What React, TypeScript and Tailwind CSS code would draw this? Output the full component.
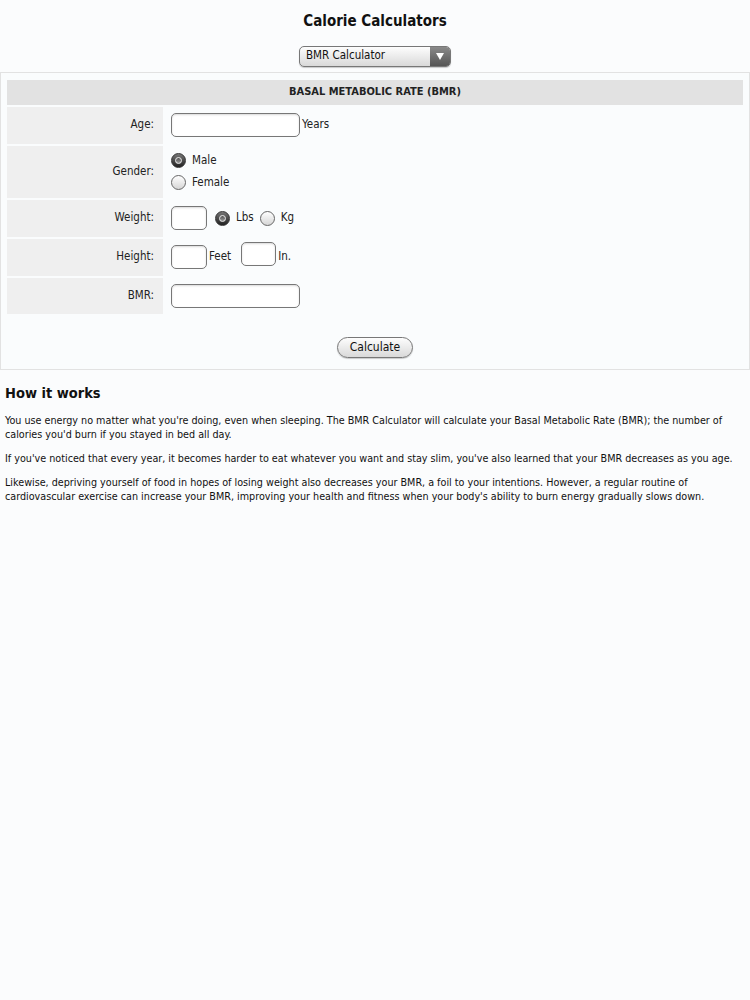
import React from "react";

const font = "font-['DejaVu_Sans_Condensed','DejaVu_Sans',sans-serif]";

const Radio = ({ checked }: { checked?: boolean }) =>
  checked ? (
    <span className="inline-flex h-[15px] w-[15px] items-center justify-center rounded-full border border-[#333] bg-linear-to-b from-[#777] to-[#222]">
      <span className="h-[7px] w-[7px] rounded-full border border-[#eee] bg-linear-to-b from-[#555] to-[#999]" />
    </span>
  ) : (
    <span className="inline-block h-[15px] w-[15px] rounded-full border border-[#666] bg-linear-to-b from-[#fff] to-[#d6d6d6]" />
  );

const TextBox = ({ w }: { w: string }) => (
  <span
    className={`inline-block h-[24px] ${w} rounded-[5px] border border-[#777] bg-white shadow-[inset_0_1px_2px_rgba(0,0,0,0.15)]`}
  />
);

const Row = ({
  label,
  h,
  children,
}: {
  label: string;
  h: string;
  children: React.ReactNode;
}) => (
  <div className={`flex ${h}`}>
    <div className="flex w-[156px] items-center justify-end bg-[#efefef] pr-[9px] text-[11.5px] text-[#222]">
      {label}
    </div>
    <div className="flex flex-1 items-center pl-[8px] text-[11.5px] text-[#222]">
      {children}
    </div>
  </div>
);

export default function App() {
  return (
    <div className={`min-h-[1000px] w-[750px] bg-[#fbfcfd] ${font}`}>
      {/* Title */}
      <h1 className="pt-[10px] text-center text-[15px] font-bold text-[#111]">
        Calorie Calculators
      </h1>

      {/* Calculator picker */}
      <div className="mt-[13px] flex justify-center">
        <div className="flex h-[21px] w-[152px] overflow-hidden rounded-[5px] border border-[#777] bg-linear-to-b from-[#fdfdfd] to-[#d9d9d9] shadow-[0_1px_1px_rgba(0,0,0,0.2)]">
          <span className="flex flex-1 items-center pl-[6px] text-[11.5px] text-[#111]">
            BMR Calculator
          </span>
          <span className="flex w-[20px] items-center justify-center bg-linear-to-b from-[#8a8a8a] to-[#555]">
            <svg width="8" height="7" viewBox="0 0 8 7">
              <path d="M0 0 H8 L4 7 Z" fill="#fff" />
            </svg>
          </span>
        </div>
      </div>

      {/* Form box */}
      <div className="mt-[5px] border border-[#e2e2e2] bg-[#fafcfd] px-[6px] pt-[7px] pb-[11px]">
        <div className="flex h-[25px] items-center justify-center bg-[#e2e2e2] text-[11px] font-bold text-[#222]">
          BASAL METABOLIC RATE (BMR)
        </div>

        <div className="mt-[2px] flex flex-col gap-[2px]">
          <Row label="Age:" h="h-[37px]">
            <TextBox w="w-[129px]" />
            <span className="ml-[2px]">Years</span>
          </Row>
          <Row label="Gender:" h="h-[52px]">
            <div className="flex flex-col gap-[5px]">
              <label className="flex items-center gap-[6px]">
                <Radio checked />
                Male
              </label>
              <label className="flex items-center gap-[6px]">
                <Radio />
                Female
              </label>
            </div>
          </Row>
          <Row label="Weight:" h="h-[37px]">
            <TextBox w="w-[36px]" />
            <span className="ml-[8px] flex items-center gap-[6px]">
              <Radio checked />
              Lbs
            </span>
            <span className="ml-[6px] flex items-center gap-[6px]">
              <Radio />
              Kg
            </span>
          </Row>
          <Row label="Height:" h="h-[37px]">
            <TextBox w="w-[36px]" />
            <span className="ml-[2px]">Feet</span>
            <span className="ml-[10px]">
              <TextBox w="w-[35px]" />
            </span>
            <span className="ml-[2px]">In.</span>
          </Row>
          <Row label="BMR:" h="h-[36px]">
            <TextBox w="w-[129px]" />
          </Row>
        </div>

        <div className="mt-[23px] flex justify-center">
          <button className="h-[21px] w-[76px] rounded-full border border-[#777] bg-linear-to-b from-[#fdfdfd] to-[#d9d9d9] text-[12px] text-[#111] shadow-[0_1px_1px_rgba(0,0,0,0.2)]">
            Calculate
          </button>
        </div>
      </div>

      {/* How it works */}
      <div className="px-[5px] text-[#111]">
        <h2 className="mt-[13px] text-[14.5px] font-bold">How it works</h2>
        <div className="mt-[10px] flex flex-col gap-[10px] text-[10.7px] leading-[14px]">
          <p>
            You use energy no matter what you're doing, even when sleeping. The
            BMR Calculator will calculate your Basal Metabolic Rate (BMR); the
            number of calories you'd burn if you stayed in bed all day.
          </p>
          <p>
            If you've noticed that every year, it becomes harder to eat whatever
            you want and stay slim, you've also learned that your BMR decreases
            as you age.
          </p>
          <p>
            Likewise, depriving yourself of food in hopes of losing weight also
            decreases your BMR, a foil to your intentions. However, a regular
            routine of cardiovascular exercise can increase your BMR, improving
            your health and fitness when your body's ability to burn energy
            gradually slows down.
          </p>
        </div>
      </div>
    </div>
  );
}
